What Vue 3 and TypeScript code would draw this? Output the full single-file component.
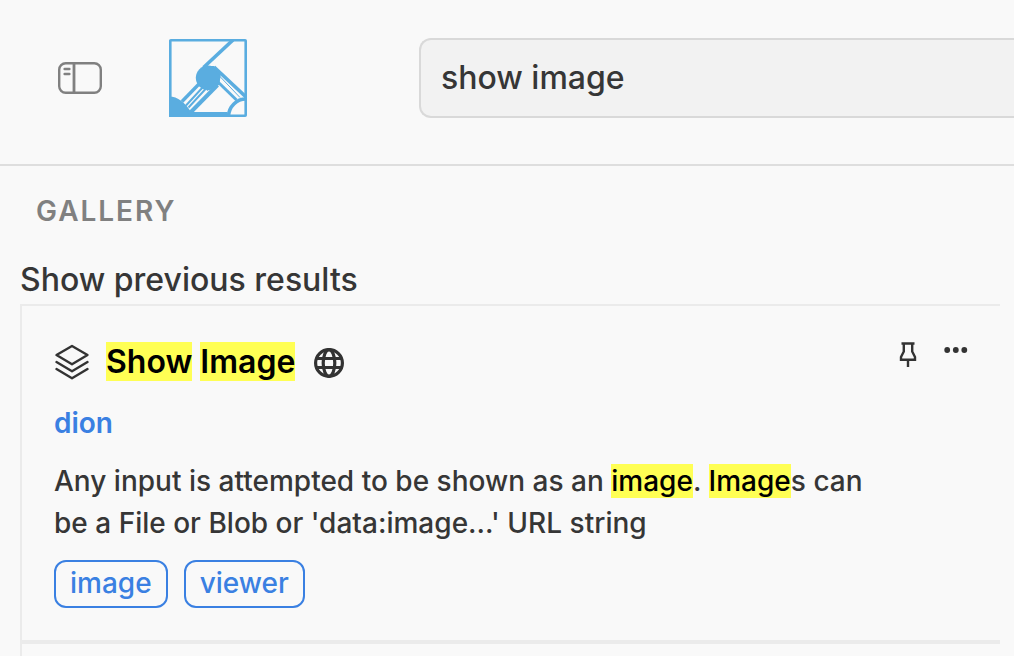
<script setup lang="ts">
import { ref } from 'vue'

interface Part {
  text: string
  hit?: boolean
}

const query = ref('show image')
const title: Part[] = [{ text: 'Show', hit: true }, { text: ' ' }, { text: 'Image', hit: true }]
const description: Part[] = [
  { text: 'Any input is attempted to be shown as an ' },
  { text: 'image', hit: true },
  { text: '. ' },
  { text: 'Image', hit: true },
  { text: "s can be a File or Blob or 'data:image...' URL string" },
]
const tags: string[] = ['image', 'viewer']
</script>

<template>
  <div class="app">
    <header class="topbar">
      <svg class="sidebar-icon" viewBox="0 0 44 32" fill="none" stroke="#808080">
        <rect x="1.2" y="1.2" width="41.6" height="29.6" rx="6.5" stroke-width="2.4" />
        <path d="M16 1v30" stroke-width="2.8" />
        <path d="M6.6 7h4.8M6.6 12h4.8" stroke-width="2.4" stroke-linecap="round" />
      </svg>
      <svg class="logo" viewBox="0 0 78 78" fill="none" stroke="#5aade0">
        <path d="M0 57.500c9 0 16 6 22 15.500H58.500v5H0z" fill="#5aade0" stroke="none" />
        <path d="M64 1L34.500 28.500" stroke-width="3.600" />
        <path d="M31 30.500L36 27h9l7 7-2 12-12 6z" fill="#5aade0" stroke="none" />
        <circle cx="39" cy="38.800" r="12.200" fill="#5aade0" stroke="none" />
        <path d="M30 45L13 62.500" stroke-width="3.400" />
        <path d="M34 48L17 66.500M37 49.500L19.500 68.500" stroke-width="1.900" />
        <path d="M48.500 46L20 75" stroke-width="4" />
        <path d="M45 28L77 58" stroke-width="3.600" />
        <path d="M50 36.500L71 58.500" stroke-width="1" />
        <path d="M49 43L67.500 61" stroke-width="3" />
        <path d="M77 60c-9.500 0-17 7.500-17.500 17" stroke-width="3.600" />
        <rect x="1.300" y="1.300" width="75.400" height="75.400" rx=".5" stroke-width="2.600" />
      </svg>
      <div class="search"><span>{{ query }}</span></div>
    </header>

    <main class="content">
      <h2 class="section">GALLERY</h2>
      <div class="previous">Show previous results</div>
      <div class="results">
        <article class="card">
          <div class="card-head">
            <svg class="layers" viewBox="0 0 36 36" fill="none" stroke="#333" stroke-width="2.400" stroke-linejoin="round" stroke-linecap="round">
              <path d="M18 2L33.500 11 18 20.200 2.500 11z" />
              <path d="M2.500 18L18 27.200 33.500 18" />
              <path d="M2.500 25L18 34.200 33.500 25" />
            </svg>
            <h3 class="title"><template v-for="(p, i) in title" :key="i"><mark v-if="p.hit">{{ p.text }}</mark><template v-else>{{ p.text }}</template></template></h3>
            <svg class="globe" viewBox="0 0 30 30" fill="none" stroke="#333" stroke-width="3.200">
              <circle cx="15" cy="15" r="13.400" />
              <ellipse cx="15" cy="15" rx="5.800" ry="13.400" />
              <path d="M2.500 10.500h25M2.500 19.500h25" />
            </svg>
            <div class="actions">
              <svg class="pin" viewBox="0 0 18 26" fill="none" stroke="#333" stroke-width="2.400">
                <path d="M2.500 1.500h13M4.800 1.500v8L2 15v2.700h14V15l-2.800-5.500v-8M9 17.700V25" />
              </svg>
              <svg class="dots" viewBox="0 0 24 6" fill="#333">
                <circle cx="3.200" cy="3" r="2.900" /><circle cx="11.800" cy="3" r="2.900" /><circle cx="20.300" cy="3" r="2.900" />
              </svg>
            </div>
          </div>
          <a class="author">dion</a>
          <p class="description"><template v-for="(p, i) in description" :key="i"><mark v-if="p.hit">{{ p.text }}</mark><template v-else>{{ p.text }}</template></template></p>
          <div class="tags">
            <span v-for="tag in tags" :key="tag" class="tag">{{ tag }}</span>
          </div>
        </article>
        <div class="next-card"></div>
      </div>
    </main>
  </div>
</template>

<style>
body {
  margin: 0;
  background: #f9f9f9;
}
</style>

<style scoped>
.app {
  width: 100%;
  height: 656px;
  overflow: hidden;
  background: #f9f9f9;
  color: #363636;
  font-family: Inter, "Liberation Sans", sans-serif;
  font-weight: 500;
  display: flex;
  flex-direction: column;
}
.topbar {
  flex: none;
  box-sizing: border-box;
  height: 166px;
  padding: 38px 0 0 58px;
  border-bottom: 2px solid #dedede;
  display: flex;
  align-items: flex-start;
}
.sidebar-icon {
  width: 44px;
  height: 32px;
  margin-top: 24px;
}
.logo {
  width: 78px;
  height: 78px;
  margin: 1px 172px 0 67px;
}
.search {
  flex: 1;
  box-sizing: border-box;
  height: 80px;
  padding: 0 0 2px 20px;
  border: 2px solid #d9d9d9;
  border-right: 0;
  border-radius: 12px 0 0 12px;
  background: #f2f2f2;
  display: flex;
  align-items: center;
  font-size: 32px;
}
.content {
  flex: 1;
  padding: 0 14px 0 20px;
  display: flex;
  flex-direction: column;
}
.section {
  margin: 28px 0 0 16px;
  font-size: 28px;
  line-height: 34px;
  font-weight: 600;
  letter-spacing: 1.960px;
  color: #808080;
}
.previous {
  margin-top: 32px;
  font-size: 32px;
  line-height: 39px;
}
.results {
  flex: 1;
  margin-top: 5px;
  border-top: 2px solid #ebebeb;
  border-left: 2px solid #ebebeb;
}
.card {
  box-sizing: border-box;
  height: 338px;
  padding: 36px 32px 0;
  border-bottom: 4px solid #ebebeb;
}
.card-head {
  display: flex;
  align-items: flex-start;
}
.layers {
  width: 36px;
  height: 36px;
  margin-top: 2px;
}
.title {
  margin: 0 0 0 16px;
  font-size: 32px;
  line-height: 39px;
  font-weight: 600;
}
mark {
  background: #ffff54;
  color: #000;
}
.globe {
  width: 30px;
  height: 30px;
  margin: 6px 0 0 19px;
}
.actions {
  flex: 1;
  display: flex;
  justify-content: flex-end;
  align-items: flex-start;
}
.pin {
  width: 18px;
  height: 26px;
  margin: 0 27px 0 0;
}
.dots {
  width: 24px;
  height: 6px;
  margin-top: 5px;
}
.author {
  display: block;
  margin-top: 25px;
  font-size: 28px;
  line-height: 34px;
  font-weight: 600;
  color: #3a80e2;
}
.description {
  margin: 20px 0 0;
  width: 840px;
  font-size: 28px;
  line-height: 42px;
  letter-spacing: 0.008px;
}
.tags {
  display: flex;
  gap: 16px;
  margin-top: 16px;
}
.tag {
  box-sizing: border-box;
  height: 48px;
  padding: 0 14px;
  border: 2px solid #3a80e2;
  border-radius: 12px;
  font-size: 28px;
  line-height: 43px;
  color: #3a80e2;
}
</style>
